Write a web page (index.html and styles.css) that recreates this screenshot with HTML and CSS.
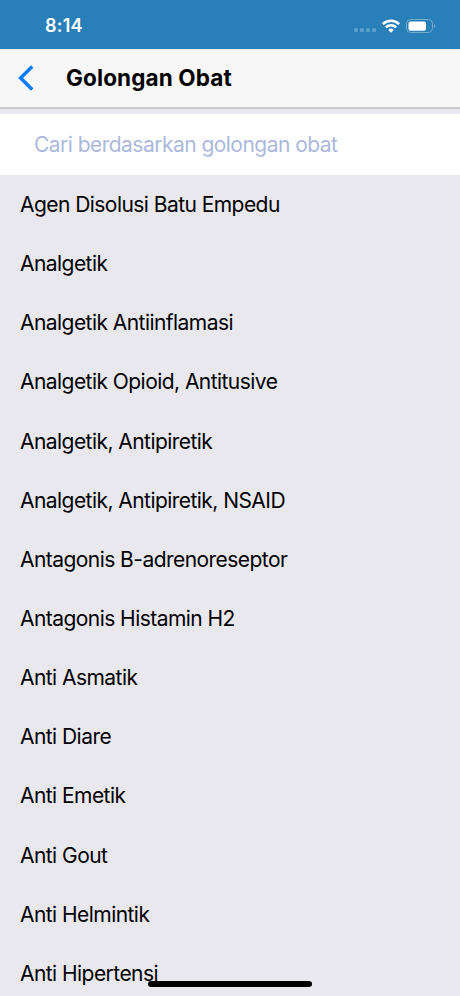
FILE: index.html
```html
<!DOCTYPE html>
<html lang="id">
<head>
  <meta charset="UTF-8" />
  <title>Golongan Obat</title>
  <meta name="viewport" content="width=device-width, initial-scale=1.0"/>
  <link rel="stylesheet" href="styles.css">
</head>
<body>
  <div class="status-bar">
    <span class="time">8:14</span>
    <div class="status-icons">
      <div class="signal"><i></i><i></i><i></i><i></i></div>
      <svg class="wifi" width="18" height="14" viewBox="0 0 18 14">
        <path d="M0.9 5.1a11.4 11.4 0 0 1 16.2 0" />
        <path d="M3.9 8.4a7.2 7.2 0 0 1 10.2 0" />
        <path class="dot" d="M9 13.8l-2.7-2.9a3.8 3.8 0 0 1 5.4 0z" />
      </svg>
      <svg class="battery" width="30" height="14" viewBox="0 0 30 14">
        <rect class="shell" x="0.5" y="0.5" width="26" height="13" rx="4" />
        <rect class="level" x="2.5" y="2.4" width="17.5" height="9.3" rx="2" />
        <path class="cap" d="M28 4.9c2 .8 2 3.4 0 4.2z" />
      </svg>
    </div>
  </div>

  <header class="nav-bar">
    <a class="back" href="#" aria-label="Kembali">
      <svg width="16" height="26" viewBox="0 0 16 26"><path d="M14.2 1.5L2.6 13L14.2 24.5" /></svg>
    </a>
    <h1>Golongan Obat</h1>
  </header>

  <div class="search">
    <input type="text" placeholder="Cari berdasarkan golongan obat">
  </div>

  <ul class="drug-list">
    <li><span>Agen Disolusi Batu Empedu</span></li>
    <li><span>Analgetik</span></li>
    <li><span>Analgetik Antiinflamasi</span></li>
    <li><span>Analgetik Opioid, Antitusive</span></li>
    <li><span>Analgetik, Antipiretik</span></li>
    <li><span>Analgetik, Antipiretik, NSAID</span></li>
    <li><span>Antagonis B-adrenoreseptor</span></li>
    <li><span>Antagonis Histamin H2</span></li>
    <li><span>Anti Asmatik</span></li>
    <li><span>Anti Diare</span></li>
    <li><span>Anti Emetik</span></li>
    <li><span>Anti Gout</span></li>
    <li><span>Anti Helmintik</span></li>
    <li><span>Anti Hipertensi</span></li>
  </ul>

  <div class="home-indicator"></div>
</body>
</html>
```
FILE: styles.css
```css
* {
  box-sizing: border-box;
}

body {
  font-family: Inter, sans-serif;
  margin: 0;
  height: 996px;
  overflow: hidden;
  background: #e9e8ef;
  color: #000;
  display: flex;
  flex-direction: column;
}

.status-bar {
  height: 49px;
  flex-shrink: 0;
  background: #2980b9;
  color: white;
  display: flex;
  align-items: center;
  justify-content: space-between;
  padding: 2px 24px 0 45px;
}

.time {
  font-size: 18px;
  font-weight: 600;
  letter-spacing: 0.2px;
}

.status-icons {
  display: flex;
  align-items: center;
  gap: 6px;
}

.signal {
  display: flex;
  gap: 2px;
  padding-top: 9px;
}

.signal i {
  width: 4px;
  height: 4px;
  border-radius: 1.5px;
  background: #5ea0cc;
}

.wifi path {
  fill: none;
  stroke: white;
  stroke-width: 2.5;
}

.wifi .dot {
  fill: white;
  stroke: none;
}

.battery .shell {
  fill: none;
  stroke: #72abd0;
}

.battery .level {
  fill: white;
}

.battery .cap {
  fill: #72abd0;
}

.nav-bar {
  height: 60px;
  flex-shrink: 0;
  background: #f7f7f7;
  border-bottom: 2px solid #cbcbcd;
  display: flex;
  align-items: center;
  padding-left: 18px;
}

.back {
  width: 48px;
  display: flex;
}

.back path {
  fill: none;
  stroke: #007aff;
  stroke-width: 3.4;
}

h1 {
  margin: 0;
  padding-bottom: 1px;
  font-size: 22.5px;
  font-weight: 700;
  letter-spacing: 0.12px;
}

.search {
  margin-top: 5px;
  height: 61px;
  flex-shrink: 0;
  background: white;
  display: flex;
}

.search input {
  width: 100%;
  border: none;
  padding: 0 34px;
  background: none;
  font-family: inherit;
  font-size: 21px;
  letter-spacing: -0.53px;
}

.search input::placeholder {
  color: #abb9dc;
}

.drug-list {
  list-style: none;
  margin: 0;
  padding: 0 20px;
}

.drug-list li {
  height: 59.15px;
  display: flex;
  align-items: center;
  font-size: 21px;
  letter-spacing: -0.55px;
}

/* Sits over the last row */
.home-indicator {
  position: absolute;
  left: 148px;
  bottom: 9px;
  width: 164px;
  height: 6px;
  border-radius: 3px;
  background: #000;
}
```
